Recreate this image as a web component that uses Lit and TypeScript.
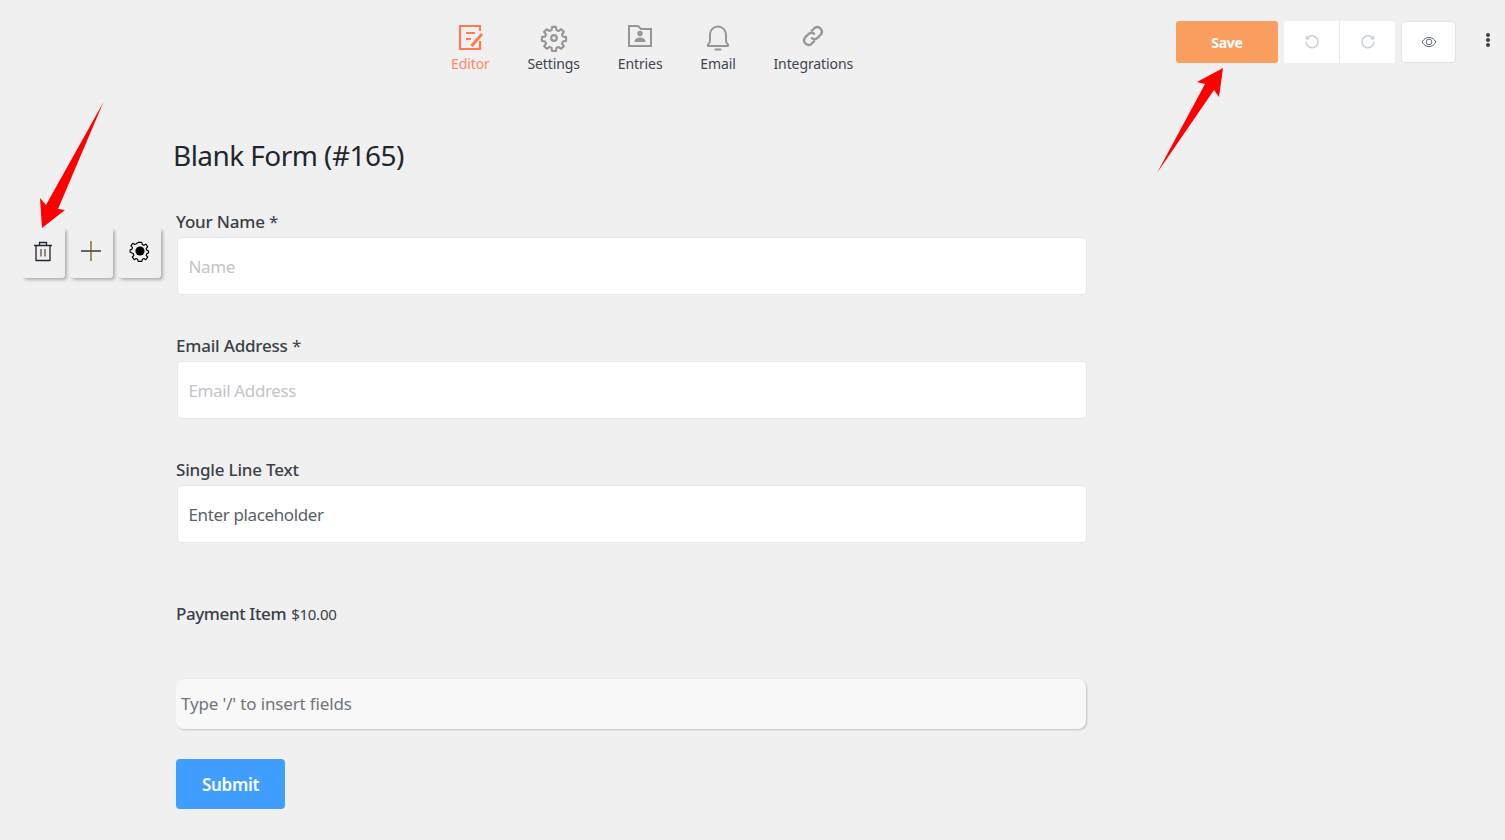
import { LitElement, html, css, svg } from "lit";
import { customElement } from "lit/decorators.js";

const editorIcon = svg`<svg class="ic" width="28" height="28" viewBox="0 0 28 28" fill="none" stroke="#ff7a4f" stroke-width="2.2"><path d="M24 7V2H4v23h20v-8"/><path d="M10 9h9M10 15h5" stroke-width="2"/><path d="M15.500 22L26 10" stroke-width="3"/></svg>`;
const gearIcon = svg`<svg class="ic" width="28" height="28" viewBox="0 0 24 24" fill="none" stroke="#969696" stroke-width="1.900" stroke-linejoin="round"><circle cx="12" cy="12" r="2.400"/><path d="M10.300 2h3.400l.5 2.900 1.900.8 2.400-1.700 2.400 2.400-1.700 2.400.8 1.900 2.900.5v3.400l-2.900.5-.8 1.900 1.700 2.400-2.400 2.400-2.400-1.700-1.900.8-.5 2.900h-3.400l-.5-2.900-1.900-.8-2.400 1.700-2.400-2.400 1.700-2.400-.8-1.900-2.900-.5v-3.400l2.900-.5.8-1.900L3.100 6.400l2.400-2.400 2.400 1.700 1.900-.8z" transform="translate(.6 .6) scale(.95)"/></svg>`;
const folderIcon = svg`<svg class="ic" width="28" height="28" viewBox="0 0 28 28"><path d="M3 2h9l3 3h10v17H3z" fill="none" stroke="#969696" stroke-width="2"/><circle cx="14" cy="9.500" r="2.700" fill="#969696"/><path d="M8.500 18c0-3 2.500-4.500 5.500-4.500s5.500 1.500 5.500 4.500z" fill="#969696"/></svg>`;
const bellIcon = svg`<svg class="ic" width="28" height="28" viewBox="0 0 28 28" fill="none" stroke="#969696" stroke-width="2"><path d="M4 22h20v-1.500c-1.500-1-2-2-2-4V10.500a8 8 0 0 0-16 0V16.500c0 2-.5 3-2 4z" stroke-linejoin="round"/><path d="M11.500 25.500h5" stroke-width="2.200" stroke-linecap="round"/></svg>`;
const linkIcon = svg`<svg class="ic" width="28" height="28" viewBox="0 1.700 24 24" fill="none" stroke="#969696" stroke-width="2" stroke-linecap="round"><path d="M11 7.500l2.500-2.500a4 4 0 0 1 5.500 5.500l-3 3a4 4 0 0 1-5 .5"/><path d="M13 16.500L10.500 19A4 4 0 0 1 5 13.500l3-3a4 4 0 0 1 5-.5"/></svg>`;
const undoIcon = svg`<svg width="16" height="16" viewBox="0 0 16 16" fill="none" stroke="#c8ced8" stroke-width="1.500"><path d="M3.500 3.800A6 6 0 1 1 2 8"/><path d="M2.500 1.800v3h3" stroke-width="1.400"/></svg>`;
const redoIcon = svg`<svg width="16" height="16" viewBox="0 0 16 16" fill="none" stroke="#c8ced8" stroke-width="1.500"><path d="M12.500 3.800A6 6 0 1 0 14 8"/><path d="M13.500 1.800v3h-3" stroke-width="1.400"/></svg>`;
const eyeIcon = svg`<svg width="16" height="12" viewBox="0 0 16 12" fill="none" stroke="#5f6b7a" stroke-width="1"><path d="M1 6c1.800-3 4.200-4.500 7-4.500S13.200 3 15 6c-1.800 3-4.200 4.500-7 4.500S2.800 9 1 6z"/><circle cx="8" cy="6" r="2.800"/></svg>`;
const trashIcon = svg`<svg width="20" height="22" viewBox="0 0 20 22" fill="none" stroke="#1c2733" stroke-width="1.300"><path d="M1 5.500h18M3 5.500V20.500h14V5.500M6.500 5.500V2.500h7v3"/><path d="M8 9v7.500M12 9v7.500" stroke="#5a5040"/></svg>`;
const plusIcon = svg`<svg width="20" height="20" viewBox="0 0 20 20" stroke="#1a1a1a" stroke-width="1.300"><path d="M0 10h20"/><path d="M10 0v20" stroke="#7a5a10"/></svg>`;
const blackGear = svg`<svg width="22" height="22" viewBox="0 0 22 22"><circle cx="11" cy="11" r="4.600" fill="#000"/><path d="M9 1.500h4l.6 2.400 1.800.8 2.100-1.300 2.100 2.900-1.700 1.700.5 1.900 2.100 1.100v2l-2.100 1.100-.5 1.900 1.700 1.700-2.100 2.900-2.100-1.300-1.800.8-.6 2.400H9l-.6-2.400-1.800-.8-2.100 1.300-2.100-2.900 1.700-1.700-.5-1.900L0 12v-2l2.100-1.100.5-1.900L.9 5.300 3 2.400l2.100 1.300 1.800-.8z" transform="translate(1.100 1.100) scale(.9)" fill="none" stroke="#000" stroke-width="1.300" stroke-linejoin="round"/></svg>`;

@customElement("app-root")
export class AppRoot extends LitElement {
  static styles = css`
    :host {
      display: block;
      position: relative;
      width: 100%;
      height: 840px;
      overflow: hidden;
      background: #f0f0f0;
      font-family: "Noto Sans", "Open Sans", sans-serif;
      color: #3a3f47;
    }
    .top {
      display: flex;
      align-items: flex-start;
      justify-content: space-between;
      height: 84px;
      padding: 21px 0 0 451px;
      box-sizing: border-box;
    }
    .nav { display: flex; gap: 37.75px; margin-top: 3px; }
    .nav-item {
      display: flex;
      flex-direction: column;
      align-items: center;
      font-size: 14px;
      line-height: 20px;
      letter-spacing: -0.1px;
      color: #3d4450;
      gap: 2px;
    }
    .ic { display: block; }
    .nav-item.active { color: #ff8a65; }
    .actions { display: flex; align-items: flex-start; }
    .save {
      width: 102px;
      height: 42px;
      display: flex;
      align-items: center;
      justify-content: center;
      background: #fa9e5f;
      color: #fff;
      font-weight: 700;
      font-size: 14px;
      letter-spacing: -0.3px;
      border-radius: 3px;
    }
    .hist {
      display: flex;
      margin-left: 6px;
      height: 42px;
      background: #fff;
      border-radius: 3px;
    }
    .hist div {
      width: 55px;
      display: flex;
      align-items: center;
      justify-content: center;
    }
    .hist div + div { width: 56px; border-left: 1px solid #e6e9ef; box-sizing: border-box; }
    .eye {
      margin-left: 6px;
      width: 55px;
      height: 42px;
      box-sizing: border-box;
      border: 1px solid #dfe3ea;
      border-radius: 4px;
      background: #fff;
      display: flex;
      align-items: center;
      justify-content: center;
    }
    .dots {
      margin-left: 30px;
      width: 4px;
      display: flex;
      flex-direction: column;
      gap: 1px;
      padding-top: 12px;
      margin-right: 15px;
    }
    .dots i { width: 4px; height: 4px; border-radius: 50%; background: #3a3f4a; }
    .body { display: flex; }
    .side {
      display: flex;
      gap: 5px;
      width: 139px;
      margin-left: 22px;
      padding-top: 144px;
      height: 50px;
      flex: none;
    }
    .tool {
      width: 43px;
      height: 50px;
      box-sizing: border-box;
      padding: 0 1px 4px 0;
      flex: none;
      background: #f0f0f0;
      border-radius: 3px;
      box-shadow: 2px 2px 3px rgba(90, 80, 80, 0.4);
      display: flex;
      align-items: center;
      justify-content: center;
    }
    .tool:last-child { padding-right: 0; }
    .form { width: 911px; margin-left: 15px; }
    h1 {
      margin: 0 0 16px -3px;
      padding-top: 32px;
      font-size: 28px;
      line-height: 78px;
      height: 78px;
      font-weight: 400;
      letter-spacing: -0.55px;
      color: #22262c;
    }
    .field { height: 124px; }
    .label {
      font-size: 17px;
      line-height: 24px;
      height: 27px;
      font-weight: 500;
      letter-spacing: -0.2px;
      color: #3a3f47;
    }
    .label span { font-weight: 400; }
    .input {
      margin-left: 1px;
      height: 58px;
      box-sizing: border-box;
      background: #fff;
      border: 1px solid #e4e6ea;
      border-radius: 4px;
      display: flex;
      align-items: center;
      padding-left: 10.5px;
      font-size: 17px;
      letter-spacing: -0.37px;
      color: #c2c4c8;
    }
    .input.dark { color: #5a5f66; }
    .payment {
      margin-top: 20px;
      height: 77px;
      font-size: 17px;
      line-height: 24px;
      font-weight: 500;
      letter-spacing: -0.4px;
      color: #3a3f47;
    }
    .payment span { font-size: 15px; font-weight: 400; letter-spacing: -0.25px; margin-left: 1px; }
    .rich {
      width: 910px;
      height: 50px;
      box-sizing: border-box;
      background: #f8f8f8;
      border-radius: 8px;
      box-shadow: 1px 1px 2px rgba(0, 0, 0, 0.2);
      display: flex;
      align-items: center;
      padding: 0 0 2px 5px;
      font-size: 17px;
      letter-spacing: -0.15px;
      color: #70757c;
    }
    .submit {
      margin-top: 30px;
      width: 109px;
      height: 50px;
      background: #409eff;
      border-radius: 4px;
      color: #fff;
      font-weight: 600;
      font-size: 17px;
      letter-spacing: -0.3px;
      display: flex;
      align-items: center;
      justify-content: center;
    }
    .arrow { position: absolute; left: 0; top: 0; pointer-events: none; }
  `;

  render() {
    const nav = [
      ["Editor", editorIcon, true],
      ["Settings", gearIcon, false],
      ["Entries", folderIcon, false],
      ["Email", bellIcon, false],
      ["Integrations", linkIcon, false],
    ] as const;
    const fields = [
      ["Your Name", true, "Name", false],
      ["Email Address", true, "Email Address", false],
      ["Single Line Text", false, "Enter placeholder", true],
    ] as const;
    return html`
      <div class="top">
        <div class="nav">
          ${nav.map(
            ([t, i, a]) => html`<div class="nav-item ${a ? "active" : ""}">${i}<span>${t}</span></div>`
          )}
        </div>
        <div class="actions">
          <div class="save">Save</div>
          <div class="hist"><div>${undoIcon}</div><div>${redoIcon}</div></div>
          <div class="eye">${eyeIcon}</div>
          <div class="dots"><i></i><i></i><i></i></div>
        </div>
      </div>
      <div class="body">
        <div class="side">
          <div class="tool">${trashIcon}</div>
          <div class="tool">${plusIcon}</div>
          <div class="tool">${blackGear}</div>
        </div>
        <div class="form">
          <h1>Blank Form (#165)</h1>
          ${fields.map(
            ([l, req, p, dark]) => html`<div class="field">
              <div class="label">${l}${req ? html` <span>*</span>` : ""}</div>
              <div class="input ${dark ? "dark" : ""}">${p}</div>
            </div>`
          )}
          <div class="payment">Payment Item <span>$10.00</span></div>
          <div class="rich">Type '/' to insert fields</div>
          <div class="submit">Submit</div>
        </div>
      </div>
      <svg class="arrow" width="1505" height="840" viewBox="0 0 1505 840">
        <path d="M103.500 102L58 209L65 210L42 228L40 198L46 205z" fill="#fe0000"/>
        <path d="M1157 173L1205 84L1197 82L1223 68L1219 97L1214 90z" fill="#fe0000"/>
      </svg>
    `;
  }
}
